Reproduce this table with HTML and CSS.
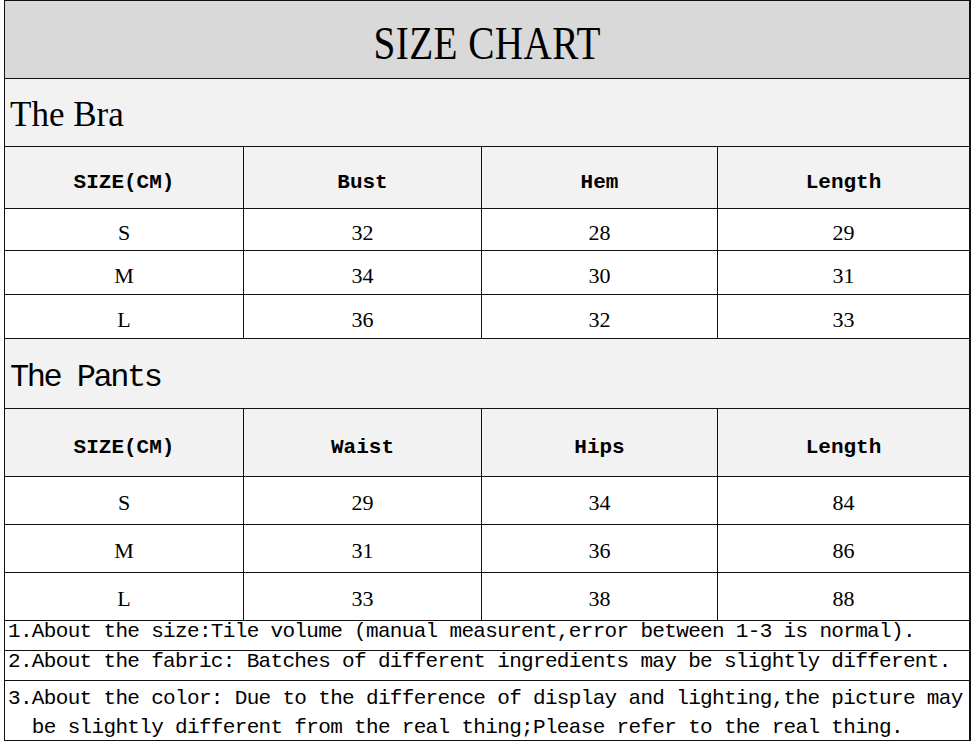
FILE: index.html
```html
<!DOCTYPE html>
<html lang="en">
<head>
<meta charset="utf-8">
<title>Size Chart</title>
<link rel="stylesheet" href="styles.css">
</head>
<body>
<div class="sheet">
  <div class="title"><span class="title-text">SIZE CHART</span></div>

  <div class="section section-bra"><span class="bra-text">The Bra</span></div>
  <div class="row head head-bra">
    <div class="cell">SIZE(CM)</div><div class="cell">Bust</div><div class="cell">Hem</div><div class="cell">Length</div>
  </div>
  <div class="row data data-bra row-s">
    <div class="cell">S</div><div class="cell">32</div><div class="cell">28</div><div class="cell">29</div>
  </div>
  <div class="row data data-bra row-m">
    <div class="cell">M</div><div class="cell">34</div><div class="cell">30</div><div class="cell">31</div>
  </div>
  <div class="row data data-bra row-l">
    <div class="cell">L</div><div class="cell">36</div><div class="cell">32</div><div class="cell">33</div>
  </div>

  <div class="section section-pants"><span class="pants-text">The Pants</span></div>
  <div class="row head head-pants">
    <div class="cell">SIZE(CM)</div><div class="cell">Waist</div><div class="cell">Hips</div><div class="cell">Length</div>
  </div>
  <div class="row data data-pants">
    <div class="cell">S</div><div class="cell">29</div><div class="cell">34</div><div class="cell">84</div>
  </div>
  <div class="row data data-pants">
    <div class="cell">M</div><div class="cell">31</div><div class="cell">36</div><div class="cell">86</div>
  </div>
  <div class="row data data-pants">
    <div class="cell">L</div><div class="cell">33</div><div class="cell">38</div><div class="cell">88</div>
  </div>

  <div class="note note-single">1.About the size:Tile volume (manual measurent,error between 1-3 is normal).</div>
  <div class="note note-single">2.About the fabric: Batches of different ingredients may be slightly different.</div>
  <div class="note note-double">
    <div class="note-line">3.About the color: Due to the difference of display and lighting,the picture may</div>
    <div class="note-line">  be slightly different from the real thing;Please refer to the real thing.</div>
  </div>
</div>
</body>
</html>
```

FILE: styles.css
```css
html, body {
  margin: 0;
  padding: 0;
  background: #ffffff;
}

body {
  color: #000;
  font-family: "Liberation Mono", "DejaVu Sans Mono", monospace;
}

.sheet {
  margin-left: 4px;
  width: 967px;
  box-sizing: border-box;
  border-top: 1px solid #111;
  border-left: 1px solid #111;
  border-right: 2px solid #111;
  border-bottom: 1px solid #111;
  background: #fff;
}

.title {
  height: 78px;
  box-sizing: border-box;
  padding-top: 7px;
  border-bottom: 1px solid #111;
  background: #d9d9d9;
  display: flex;
  align-items: center;
  justify-content: center;
}

.title-text {
  display: inline-block;
  font-family: "Liberation Serif", "Times New Roman", serif;
  font-size: 47px;
  line-height: normal;
  transform: scaleX(0.835);
  letter-spacing: 0.5px;
}

.section {
  box-sizing: border-box;
  border-bottom: 1px solid #111;
  background: #f2f2f2;
  display: flex;
  align-items: center;
}

.section-bra {
  height: 68px;
  padding-top: 4px;
  padding-left: 5px;
}

.bra-text {
  font-family: "Liberation Serif", "Times New Roman", serif;
  font-size: 35px;
}

.section-pants {
  height: 70px;
  padding-top: 7px;
  padding-left: 5px;
}

.pants-text {
  font-size: 32px;
  letter-spacing: -2.5px;
}

.row {
  display: grid;
  grid-template-columns: 239px 238px 236px 251px;
  box-sizing: border-box;
  border-bottom: 1px solid #111;
}

.cell {
  display: flex;
  align-items: center;
  justify-content: center;
  box-sizing: border-box;
  border-right: 1px solid #111;
  font-size: 21px;
}

.cell:last-child {
  border-right: none;
}

.head {
  background: #f2f2f2;
}

.head .cell {
  font-weight: bold;
  padding-top: 9px;
}

.head-bra {
  height: 62px;
}

.head-pants {
  height: 68px;
}

.data .cell {
  font-family: "Liberation Serif", "Times New Roman", serif;
  font-size: 22px;
}

.data-bra {
  height: 44px;
}

.data-bra.row-s {
  height: 42px;
}

.data-bra .cell {
  padding-top: 7px;
}

.data-pants {
  height: 48px;
}

.data-pants .cell {
  padding-top: 5px;
}

.note {
  box-sizing: border-box;
  padding-left: 3px;
  font-size: 21px;
  letter-spacing: -0.67px;
}

.note-single {
  height: 30px;
  line-height: 22px;
  white-space: pre;
  border-bottom: 1px solid #111;
}

.note-double {
  height: 59px;
  padding-top: 3px;
}

.note-line {
  line-height: 30px;
  height: 29px;
  white-space: pre;
}
```
